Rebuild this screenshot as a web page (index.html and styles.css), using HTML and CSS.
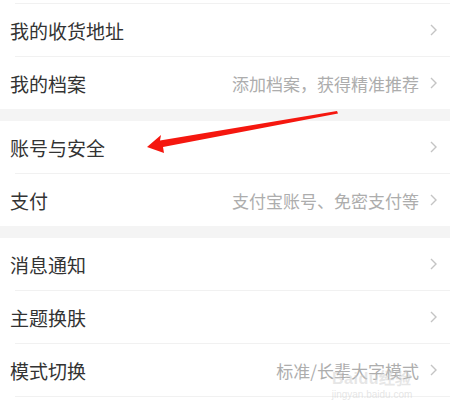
FILE: index.html
```html
<!DOCTYPE html>
<html lang="zh-CN">
<head>
<meta charset="UTF-8">
<meta name="viewport" content="width=device-width, initial-scale=1.0">
<title>设置</title>
<link rel="stylesheet" href="styles.css">
</head>
<body>
<div class="settings">
    <div class="cut"></div>
    <div class="divider"></div>
    <div class="item">
        <span class="title">我的收货地址</span>
        <span class="chevron"><svg width="7" height="12" viewBox="0 0 7 12"><path d="M1 1 L6 6 L1 11" fill="none" stroke="#c4c4c4" stroke-width="1.4"/></svg></span>
    </div>
    <div class="divider"></div>
    <div class="item">
        <span class="title">我的档案</span>
        <span class="desc">添加档案，获得精准推荐</span>
        <span class="chevron"><svg width="7" height="12" viewBox="0 0 7 12"><path d="M1 1 L6 6 L1 11" fill="none" stroke="#c4c4c4" stroke-width="1.4"/></svg></span>
    </div>

    <div class="band"></div>

    <div class="item">
        <span class="title">账号与安全</span>
        <span class="chevron"><svg width="7" height="12" viewBox="0 0 7 12"><path d="M1 1 L6 6 L1 11" fill="none" stroke="#c4c4c4" stroke-width="1.4"/></svg></span>
    </div>
    <div class="divider"></div>
    <div class="item">
        <span class="title">支付</span>
        <span class="desc">支付宝账号、免密支付等</span>
        <span class="chevron"><svg width="7" height="12" viewBox="0 0 7 12"><path d="M1 1 L6 6 L1 11" fill="none" stroke="#c4c4c4" stroke-width="1.4"/></svg></span>
    </div>

    <div class="band"></div>

    <div class="item">
        <span class="title">消息通知</span>
        <span class="chevron"><svg width="7" height="12" viewBox="0 0 7 12"><path d="M1 1 L6 6 L1 11" fill="none" stroke="#c4c4c4" stroke-width="1.4"/></svg></span>
    </div>
    <div class="divider"></div>
    <div class="item">
        <span class="title">主题换肤</span>
        <span class="chevron"><svg width="7" height="12" viewBox="0 0 7 12"><path d="M1 1 L6 6 L1 11" fill="none" stroke="#c4c4c4" stroke-width="1.4"/></svg></span>
    </div>
    <div class="divider"></div>
    <div class="item">
        <span class="title">模式切换</span>
        <span class="desc">标准/长辈大字模式</span>
        <span class="chevron"><svg width="7" height="12" viewBox="0 0 7 12"><path d="M1 1 L6 6 L1 11" fill="none" stroke="#c4c4c4" stroke-width="1.4"/></svg></span>
    </div>
    <div class="divider"></div>
</div>

<!-- red annotation arrow drawn over the list -->
<svg class="arrow" width="450" height="410" viewBox="0 0 450 410">
    <polygon points="147,147 161,135 160,140.5 337,111 338,113.5 163,147 164,153" fill="#f5170f"/>
</svg>

<div class="watermark">
    <span class="wm-logo">Bai<span class="paw">du</span>经验</span>
    <span class="wm-url">jingyan.baidu.com</span>
</div>
</body>
</html>
```

FILE: styles.css
```css
body {
    margin: 0;
    padding: 0;
    background-color: #fff;
    font-family: "Noto Sans CJK SC", "Noto Sans", sans-serif;
    width: 450px;
    height: 410px;
    overflow: hidden;
    position: relative;
}
.settings {
    display: flex;
    flex-direction: column;
}
.cut {
    height: 3px;
}
.divider {
    height: 1px;
    margin-left: 15px;
    background-color: #f1f1f1;
}
.band {
    height: 12px;
    background-color: #f4f4f4;
}
.item {
    height: 52px;
    display: flex;
    align-items: center;
    padding: 0 13px 0 10px;
}
.item .title {
    font-size: 19px;
    color: #333;
    flex: 1;
}
.item .desc {
    font-size: 17px;
    color: #adadad;
    margin-right: 11px;
}
.item .chevron {
    display: flex;
    align-items: center;
}
.arrow {
    position: absolute;
    top: 0;
    left: 0;
}
.watermark {
    position: absolute;
    left: 324px;
    top: 369px;
    width: 96px;
    display: flex;
    flex-direction: column;
    align-items: center;
    color: rgba(205, 205, 205, 0.5);
    font-family: "Liberation Sans", Arial, sans-serif;
}
.wm-logo {
    font-size: 16px;
    font-weight: bold;
    line-height: 19px;
    letter-spacing: 0.5px;
}
.wm-url {
    font-size: 10px;
    line-height: 12px;
    margin-top: 1px;
}
```
